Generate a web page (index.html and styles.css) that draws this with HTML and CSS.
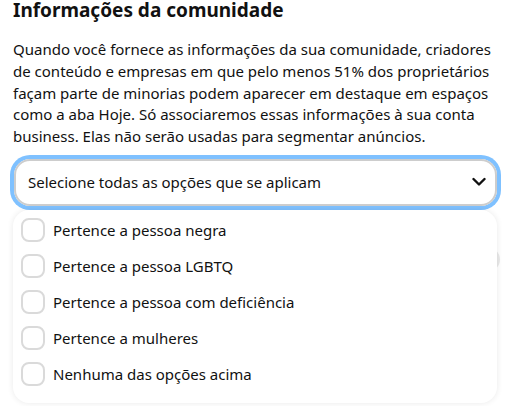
FILE: index.html
```html
<!DOCTYPE html>
<html lang="pt-BR">
<head>
<meta charset="utf-8">
<link rel="stylesheet" href="styles.css">
</head>
<body>
<div class="page">
  <h1 class="title">Informações da comunidade</h1>
  <p class="desc">Quando você fornece as informações da sua comunidade, criadores de conteúdo e empresas em que pelo menos 51% dos proprietários façam parte de minorias podem aparecer em destaque em espaços como a aba Hoje. Só associaremos essas informações à sua conta business. Elas não serão usadas para segmentar anúncios.</p>
  <div class="field">
    <div class="select">
      <span class="select-text">Selecione todas as opções que se aplicam</span>
      <svg class="chevron" width="14" height="10" viewBox="0 0 14 10"><path d="M1.5 2 L7 7.5 L12.5 2" fill="none" stroke="#111" stroke-width="2.4" stroke-linecap="round" stroke-linejoin="round"/></svg>
    </div>
    <div class="behind"></div>
    <div class="menu">
      <label class="option"><span class="box"></span><span>Pertence a pessoa negra</span></label>
      <label class="option"><span class="box"></span><span>Pertence a pessoa LGBTQ</span></label>
      <label class="option"><span class="box"></span><span>Pertence a pessoa com deficiência</span></label>
      <label class="option"><span class="box"></span><span>Pertence a mulheres</span></label>
      <label class="option"><span class="box"></span><span>Nenhuma das opções acima</span></label>
    </div>
  </div>
</div>
</body>
</html>
```
FILE: styles.css
```css
html, body {
  margin: 0;
  padding: 0;
  background: #fff;
}
body {
  font-family: "Noto Sans", "Open Sans", sans-serif;
  color: #111;
  overflow: hidden;
  height: 406px;
}
.page {
  padding: 0 0 0 13px;
}
.title {
  margin: 0;
  font-size: 19px;
  line-height: 20px;
  font-weight: 700;
}
.desc {
  margin: 19px 0 0;
  font-size: 15px;
  line-height: 21.75px;
  width: 484px;
}
.field {
  position: relative;
  margin-top: 11px;
  width: 487px;
}
.select {
  box-sizing: border-box;
  height: 47px;
  margin-left: 1px;
  width: 483px;
  border: 2px solid #cdcdcd;
  border-radius: 16px;
  box-shadow: 0 0 0 4px #7fc1ff;
  display: flex;
  align-items: center;
  justify-content: space-between;
  padding: 0 9px 0 12px;
  font-size: 15px;
}
.chevron {
  display: block;
}
.behind {
  margin-top: 41px;
  margin-left: 1px;
  height: 25px;
  width: 486px;
  border-radius: 13px;
  background: #e9e9e9;
}
.menu {
  position: absolute;
  left: 0;
  top: 51px;
  width: 484px;
  height: 193px;
  background: #fff;
  border-radius: 16px;
  box-shadow: 0 0 6px rgba(0, 0, 0, 0.09);
  padding-top: 2px;
  box-sizing: border-box;
}
.option {
  display: flex;
  align-items: center;
  height: 36px;
  padding-left: 8px;
  font-size: 15px;
}
.box {
  box-sizing: border-box;
  width: 24px;
  height: 24px;
  border: 2px solid #dadada;
  border-radius: 8px;
  margin-right: 8px;
  flex: none;
}
```
